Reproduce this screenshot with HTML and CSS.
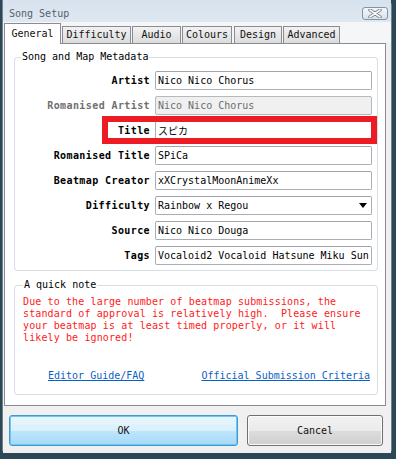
FILE: index.html
```html
<!DOCTYPE html>
<html lang="en">
<head>
    <meta charset="UTF-8">
    <title>Song Setup</title>
    <link rel="stylesheet" href="styles.css">
</head>
<body>
    <div class="window">
        <div class="titlebar">
            <span class="title">Song Setup</span>
            <span class="close">
                <svg width="14" height="9" viewBox="0 0 14 9">
                    <path d="M2 1 L12 8 M12 1 L2 8" stroke="#5d6b78" stroke-width="3.2" stroke-linecap="round"/>
                    <path d="M2 1 L12 8 M12 1 L2 8" stroke="#ffffff" stroke-width="1.6" stroke-linecap="round"/>
                </svg>
            </span>
        </div>
        <div class="client">
            <div class="tabs">
                <div class="tab active">General</div>
                <div class="tab">Difficulty</div>
                <div class="tab">Audio</div>
                <div class="tab">Colours</div>
                <div class="tab">Design</div>
                <div class="tab">Advanced</div>
            </div>
            <div class="panel">
                <fieldset class="group meta">
                    <legend>Song and Map Metadata</legend>
                    <div class="row">
                        <label>Artist</label>
                        <input class="field" value="Nico Nico Chorus">
                    </div>
                    <div class="row">
                        <label class="muted">Romanised Artist</label>
                        <input class="field" value="Nico Nico Chorus" disabled>
                    </div>
                    <div class="row highlight">
                        <label>Title</label>
                        <input class="field" value="スピカ">
                    </div>
                    <div class="row">
                        <label>Romanised Title</label>
                        <input class="field" value="SPiCa">
                    </div>
                    <div class="row">
                        <label>Beatmap Creator</label>
                        <input class="field" value="xXCrystalMoonAnimeXx">
                    </div>
                    <div class="row">
                        <label>Difficulty</label>
                        <div class="field select">
                            <span>Rainbow x Regou</span>
                            <svg width="8" height="5" viewBox="0 0 8 5"><path d="M0 0 H8 L4 5 Z" fill="#000"/></svg>
                        </div>
                    </div>
                    <div class="row">
                        <label>Source</label>
                        <input class="field" value="Nico Nico Douga">
                    </div>
                    <div class="row">
                        <label>Tags</label>
                        <input class="field" value="Vocaloid2 Vocaloid Hatsune Miku Sunshine">
                    </div>
                </fieldset>
                <fieldset class="group note">
                    <legend>A quick note</legend>
                    <p class="warning">Due to the large number of beatmap submissions, the<br>standard of approval is relatively high.&nbsp; Please ensure<br>your beatmap is at least timed properly, or it will<br>likely be ignored!</p>
                    <div class="links">
                        <a href="#">Editor Guide/FAQ</a>
                        <a href="#">Official Submission Criteria</a>
                    </div>
                </fieldset>
            </div>
            <div class="buttons">
                <button class="btn ok">OK</button>
                <button class="btn cancel">Cancel</button>
            </div>
        </div>
    </div>
</body>
</html>
```

FILE: styles.css
```css
body {
    margin: 0;
    width: 396px;
    height: 459px;
    overflow: hidden;
    background: #2c4756;
    font-family: "DejaVu Sans Mono", "Noto Sans CJK JP", monospace;
    font-size: 10px;
    line-height: 12px;
    color: #000;
}
.window {
    margin-left: 2px;
    width: 390px;
    height: 453px;
    box-sizing: border-box;
    background: #e8edf2;
    border: 1px solid #72818f;
    border-top: none;
    border-radius: 0 6px 4px 4px;
}
.titlebar {
    height: 22px;
    box-sizing: border-box;
    padding: 7px 3px 0 6px;
    display: flex;
    justify-content: space-between;
    align-items: flex-start;
    background: linear-gradient(#d6e2ee, #dfe8f1);
}
.title { color: #55616d; line-height: 13px; }
.close {
    width: 26px;
    height: 13px;
    box-sizing: border-box;
    border: 1px solid #8593a1;
    border-radius: 3px;
    background: linear-gradient(#f4f7fa, #d9e1e9);
    display: flex;
    align-items: center;
    justify-content: center;
}
.client {
    padding: 0 5px 0 1px;
    background: #f0f0f0;
    height: 431px;
    box-sizing: border-box;
}

/* tabs */
.tabs {
    height: 21px;
    display: flex;
    align-items: flex-end;
    background: #f5f6f7;
    margin-right: -5px;
}
.tab {
    height: 17px;
    box-sizing: border-box;
    margin-left: 1px;
    border: 1px solid #898c95;
    border-bottom: none;
    background: linear-gradient(#f2f2f2, #dcdcdc);
    text-align: center;
    line-height: 16px;
    color: #111;
}
.tab.active {
    height: 21px;
    margin-left: 0;
    margin-bottom: -1px;
    background: #fff;
    position: relative;
    z-index: 1;
    line-height: 19px;
}
.tab:nth-child(1) { width: 57px; }
.tab:nth-child(2) { width: 69px; }
.tab:nth-child(3) { width: 49px; }
.tab:nth-child(4) { width: 50px; }
.tab:nth-child(5) { width: 48px; margin-left: 2px; }
.tab:nth-child(6) { width: 57px; }

.panel {
    background: #fff;
    border: 1px solid #898c95;
    padding: 7px 7px 10px 9px;
}

/* group boxes */
.group {
    margin: 0;
    border: 1px solid #d5dfe5;
    border-radius: 3px;
    min-width: 0;
}
.group legend {
    padding: 0 1px;
    line-height: 12px;
}
.meta { padding: 8px 5px 5px 6px; }
.note { margin-top: 8px; padding: 5px 7px 12px 8px; }

.row {
    display: flex;
    align-items: center;
    height: 19px;
    margin-bottom: 6px;
}
.row:last-child { margin-bottom: 0; }
.row label {
    width: 129px;
    margin-right: 5px;
    text-align: right;
    font-weight: bold;
    letter-spacing: 0.4px;
}
.row label.muted { color: #707070; }
.highlight { position: relative; }
.highlight::after {
    content: "";
    position: absolute;
    top: -5px;
    bottom: -4px;
    left: 81px;
    right: -5px;
    border: 6px solid #ed1c24;
    pointer-events: none;
}
.field {
    flex: 1;
    min-width: 0;
    height: 19px;
    box-sizing: border-box;
    margin: 0;
    border: 1px solid #abadb3;
    border-top-color: #a0a3aa;
    border-radius: 2px;
    padding: 0 2px;
    font-family: inherit;
    font-size: 10px;
    color: #000;
    background: #fff;
    outline: none;
}
.field:disabled {
    background: #f0f0f0;
    border-color: #b5b9bd;
    color: #6d6d6d;
}
.select {
    display: flex;
    align-items: center;
    justify-content: space-between;
    padding: 0 4px 0 2px;
}

.warning {
    margin: 0;
    color: #ff1a1a;
    letter-spacing: 0.12px;
}
.links {
    margin-top: 26px;
    padding-left: 25px;
    display: flex;
    justify-content: space-between;
}
.links a {
    color: #0b5fc5;
    text-decoration: underline;
}

/* dialog buttons */
.buttons {
    display: flex;
    gap: 9px;
    margin-top: 9px;
    padding: 0 3px 0 5px;
}
.btn {
    height: 31px;
    border-radius: 3px;
    font-family: inherit;
    font-size: 10px;
    color: #111;
    padding: 0;
}
.ok {
    flex: 1;
    border: 1px solid #3c9ad8;
    box-shadow: inset 0 0 0 1px #6fc4f0;
    background: linear-gradient(#eaf6fd 0%, #d9f0fc 50%, #bee6fd 51%, #a7d9f5 100%);
}
.cancel {
    width: 136px;
    border: 1px solid #707070;
    box-shadow: inset 0 0 0 1px #fbfbfb;
    background: linear-gradient(#f2f2f2 0%, #ebebeb 50%, #dddddd 51%, #cfcfcf 100%);
}
```
